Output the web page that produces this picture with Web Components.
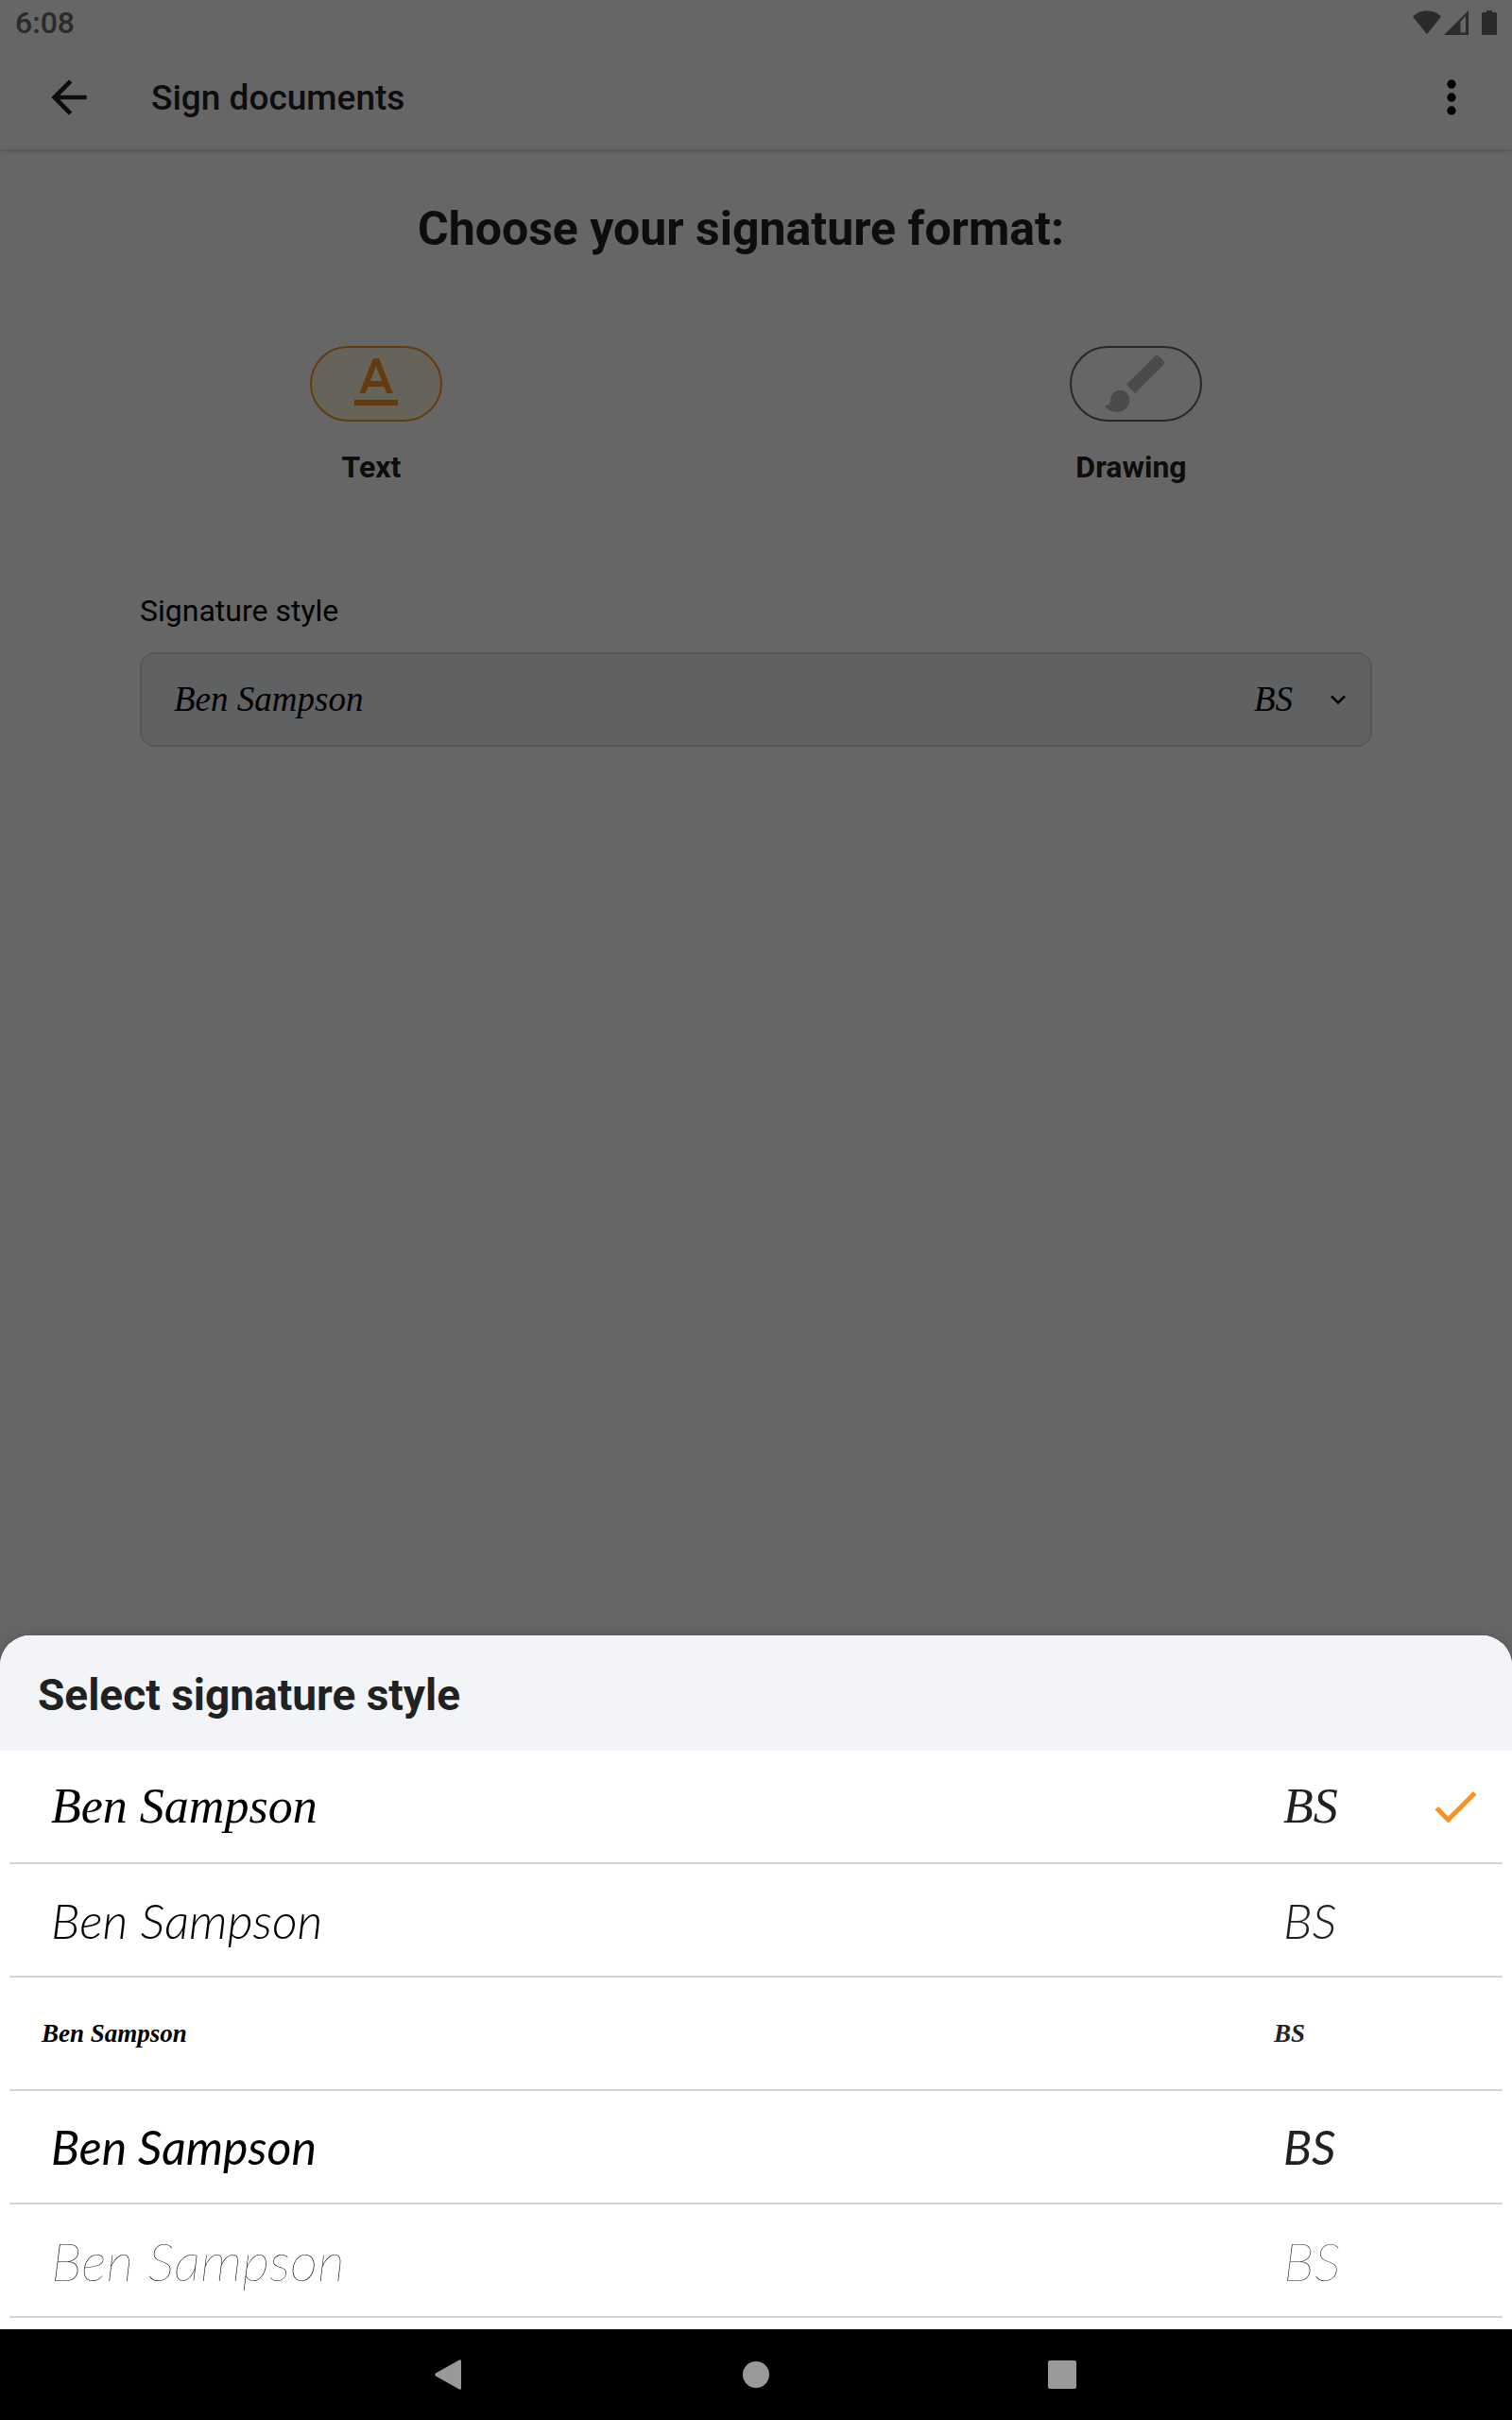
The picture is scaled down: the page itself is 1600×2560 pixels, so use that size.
<!DOCTYPE html>
<html lang="en">
<head>
<meta charset="utf-8">
<meta name="viewport" content="width=device-width, initial-scale=1">
<title>Sign documents</title>
<style>
  body { margin: 0; font-family: Roboto, "Noto Sans", sans-serif; color: #212121; background: #fff; }
</style>
</head>
<body>
<sign-app></sign-app>

<script>
const define = (name, html) => {
  const template = document.createElement('template');
  template.innerHTML = html;
  customElements.define(name, class extends HTMLElement {
    connectedCallback() {
      if (this.shadowRoot) return;
      this.attachShadow({ mode: 'open' }).append(template.content.cloneNode(true));
    }
  });
};

define('status-bar', `
  <style>
    :host { display: flex; align-items: center; justify-content: space-between; height: 48px; padding: 0 16px; color: #6b6b6b; }
    time { font-size: 32px; line-height: 48px; font-weight: 500; }
    svg { display: block; fill: currentColor; }
    .icons { display: flex; align-items: center; }
    .battery { margin-left: 14px; }
    .signal { margin-left: 3px; }
  </style>
  <time>6:08</time>
  <span class="icons">
    <svg width="30" height="26" viewBox="0 0 30 26"><path d="M0 6.500Q6.500 .300 15 .300T30 6.500L15 25.300z"/></svg>
    <svg class="signal" width="26" height="26" viewBox="0 0 26 26"><path fill-rule="evenodd" d="M0 26L26 0V26zM17.500 11.500V23.500H23V6z"/></svg>
    <svg class="battery" width="16" height="26" viewBox="0 0 16 26"><path d="M5 0h6v2h3.500Q16 2 16 3.500v21Q16 26 14.500 26h-13Q0 26 0 24.500v-21Q0 2 1.500 2H5z"/></svg>
  </span>`);

define('app-bar', `
  <style>
    :host { display: flex; align-items: center; height: 110px; padding: 0 36px 0 45px; box-shadow: 0 1px 6px rgba(0,0,0,.24); clip-path: inset(0 0 -12px 0); }
    h1 { flex: 1; margin: 0 0 0 59px; padding-top: 2px; font-size: 37px; line-height: 44px; font-weight: 500; }
    button { border: 0; padding: 0; background: none; color: inherit; }
    button:last-child { color: #000; }
    svg { display: block; width: 56px; height: 56px; fill: currentColor; }
  </style>
  <button type="button" aria-label="Back"><svg viewBox="0 0 24 24"><path d="M20 11H7.830l5.590-5.590L12 4l-8 8 8 8 1.410-1.410L7.830 13H20z"/></svg></button>
  <h1><slot></slot></h1>
  <button type="button" aria-label="More options"><svg viewBox="0 0 24 24"><circle cx="12" cy="6" r="2"/><circle cx="12" cy="12" r="2"/><circle cx="12" cy="18" r="2"/></svg></button>`);

define('format-choice', `
  <style>
    :host { display: flex; }
    button { flex: 1; display: flex; flex-direction: column; align-items: center; gap: 28px; padding: 0; border: 0; background: none; font: inherit; color: inherit; }
    .pill { box-sizing: border-box; display: flex; align-items: center; justify-content: center; width: 140px; height: 80px; border: 2px solid #616161; border-radius: 40px; color: #bababa; }
    :host([selected]) .pill { border-color: #f7931e; background: #fff7e3; color: #f7931e; }
    .label { padding-right: 10px; font-size: 32px; line-height: 40px; font-weight: 700; }
  </style>
  <button type="button"><span class="pill"><slot name="icon"></slot></span><span class="label"><slot></slot></span></button>`);

define('style-field', `
  <style>
    :host { display: flex; flex-direction: column; gap: 24px; color: #000; }
    label { font-size: 32px; line-height: 40px; }
    .box { box-sizing: border-box; display: flex; align-items: center; height: 100px; padding: 0 18px 0 34px; border: 2px solid #dcdde0; border-radius: 16px; background: #f1f3f7; font: italic 37px/48px "Liberation Serif", serif; }
    select { flex: 1; min-width: 0; padding: 0; border: 0; appearance: none; background: none; color: inherit; font: inherit; }
    .initials { margin-right: 32px; }
    svg { display: block; width: 32px; height: 32px; fill: currentColor; }
  </style>
  <label for="style">Signature style</label>
  <div class="box">
    <select id="style"><option>Ben Sampson</option></select>
    <span class="initials">BS</span>
    <svg viewBox="0 0 24 24"><path d="M7.410 8.590L12 13.170l4.590-4.580L18 10l-6 6-6-6z"/></svg>
  </div>`);

define('style-option', `
  <style>
    :host { display: block; border-bottom: 2px solid #d4d4d9; --indent: 44px; --initials: 152px; --face: italic 52px/60px "Liberation Serif", serif; }
    :host([face="light"]) { --face: italic 300 52px/60px Lato, sans-serif; }
    :host([face="narrow"]) { --indent: 34px; --initials: 162px; --face: italic 700 27px/60px "Liberation Serif", serif; }
    :host([face="round"]) { --face: italic 400 50px/60px Lato, sans-serif; }
    :host([face="hairline"]) { --face: italic 100 57px/60px Lato, sans-serif; }
    button { display: flex; align-items: center; width: 100%; height: 118px; padding: 0 20px 0 var(--indent); border: 0; background: none; font: var(--face); color: #000; text-align: left; }
    .name { flex: 1; }
    .initials { width: var(--initials); color: #212121; }
    .mark { width: 60px; height: 60px; }
    svg { display: block; fill: #f7931e; }
    :host(:not([selected])) svg { display: none; }
  </style>
  <button type="button">
    <span class="name"><slot></slot></span>
    <span class="initials"><slot name="initials"></slot></span>
    <span class="mark"><svg width="60" height="60" viewBox="0 0 24 24"><path d="M9 16.170L4.830 12l-1.420 1.410L9 19 21 7l-1.410-1.410z"/></svg></span>
  </button>`);

define('bottom-sheet', `
  <style>
    :host { display: flex; flex-direction: column; overflow: hidden; border-radius: 32px 32px 0 0; background: #fff; }
    h2 { margin: 0; padding: 36px 40px 32px; background: #f3f4f7; font-size: 46px; line-height: 54px; font-weight: 700; }
    .list { padding: 0 10px 12px; }
  </style>
  <h2><slot name="title"></slot></h2>
  <div class="list"><slot></slot></div>`);

define('nav-bar', `
  <style>
    :host { display: flex; align-items: center; justify-content: center; gap: 228px; height: 96px; background: #000; }
    button { display: flex; justify-content: center; width: 96px; padding: 0; border: 0; background: none; }
    svg { display: block; fill: #999; }
  </style>
  <button type="button" aria-label="Back"><svg width="32" height="32" viewBox="0 0 32 32"><path d="M26 .500Q28 -.500 28 2V30Q28 32.500 26 31.500L1 17.500Q-.500 16 1 14.500z"/></svg></button>
  <button type="button" aria-label="Home"><svg width="28" height="28" viewBox="0 0 28 28"><circle cx="14" cy="14" r="14"/></svg></button>
  <button type="button" aria-label="Recents"><svg width="30" height="30" viewBox="0 0 30 30"><rect width="30" height="30" rx="2"/></svg></button>`);

define('sign-app', `
  <style>
    :host { display: flex; flex-direction: column; min-height: 100vh; }
    .stage { flex: 1; display: grid; }
    .screen, .scrim, bottom-sheet { grid-area: 1 / 1; }
    .scrim { z-index: 1; background: rgba(0,0,0,.6); }
    bottom-sheet { z-index: 2; align-self: end; box-shadow: 0 0 16px rgba(0,0,0,.12); }
    h2 { margin: 54px 0 94px; padding-right: 32px; text-align: center; font-size: 50px; line-height: 60px; font-weight: 700; }
    .choices { display: grid; grid-template-columns: 1fr 1fr; gap: 8px; }
    style-field { margin: 112px 148px 0; }
    svg { display: block; }
  </style>
  <div class="stage">
    <div class="screen">
      <status-bar></status-bar>
      <app-bar>Sign documents</app-bar>
      <h2>Choose your signature format:</h2>
      <div class="choices">
        <format-choice selected>
          <svg slot="icon" width="46" height="54" viewBox="0 0 46 54" fill="none" stroke="currentColor">
            <svg x="0" y="0" width="46" height="37" viewBox="0 0 46 37"><path stroke-width="6" d="M7 41L23.500 -1M39 41L22.500 -1M13 27H33"/></svg>
            <path stroke-width="6" d="M0 47H46"/>
          </svg>
          Text
        </format-choice>
        <format-choice>
          <svg slot="icon" width="80" height="80" viewBox="0 0 24 24" fill="currentColor"><path d="M7 14c-1.660 0-3 1.340-3 3 0 1.310-1.160 2-2 2 .920 1.220 2.490 2 4 2 2.210 0 4-1.790 4-4 0-1.660-1.340-3-3-3zm13.710-9.370l-1.340-1.340c-.390-.390-1.020-.390-1.410 0L9 12.250 11.750 15l8.960-8.960c.390-.390.390-1.020 0-1.410z"/></svg>
          Drawing
        </format-choice>
      </div>
      <style-field></style-field>
    </div>
    <div class="scrim"></div>
    <bottom-sheet>
      <span slot="title">Select signature style</span>
      <style-option selected>Ben Sampson<span slot="initials">BS</span></style-option>
      <style-option face="light">Ben Sampson<span slot="initials">BS</span></style-option>
      <style-option face="narrow">Ben Sampson<span slot="initials">BS</span></style-option>
      <style-option face="round">Ben Sampson<span slot="initials">BS</span></style-option>
      <style-option face="hairline">Ben Sampson<span slot="initials">BS</span></style-option>
    </bottom-sheet>
  </div>
  <nav-bar></nav-bar>`);
</script>
</body>
</html>
